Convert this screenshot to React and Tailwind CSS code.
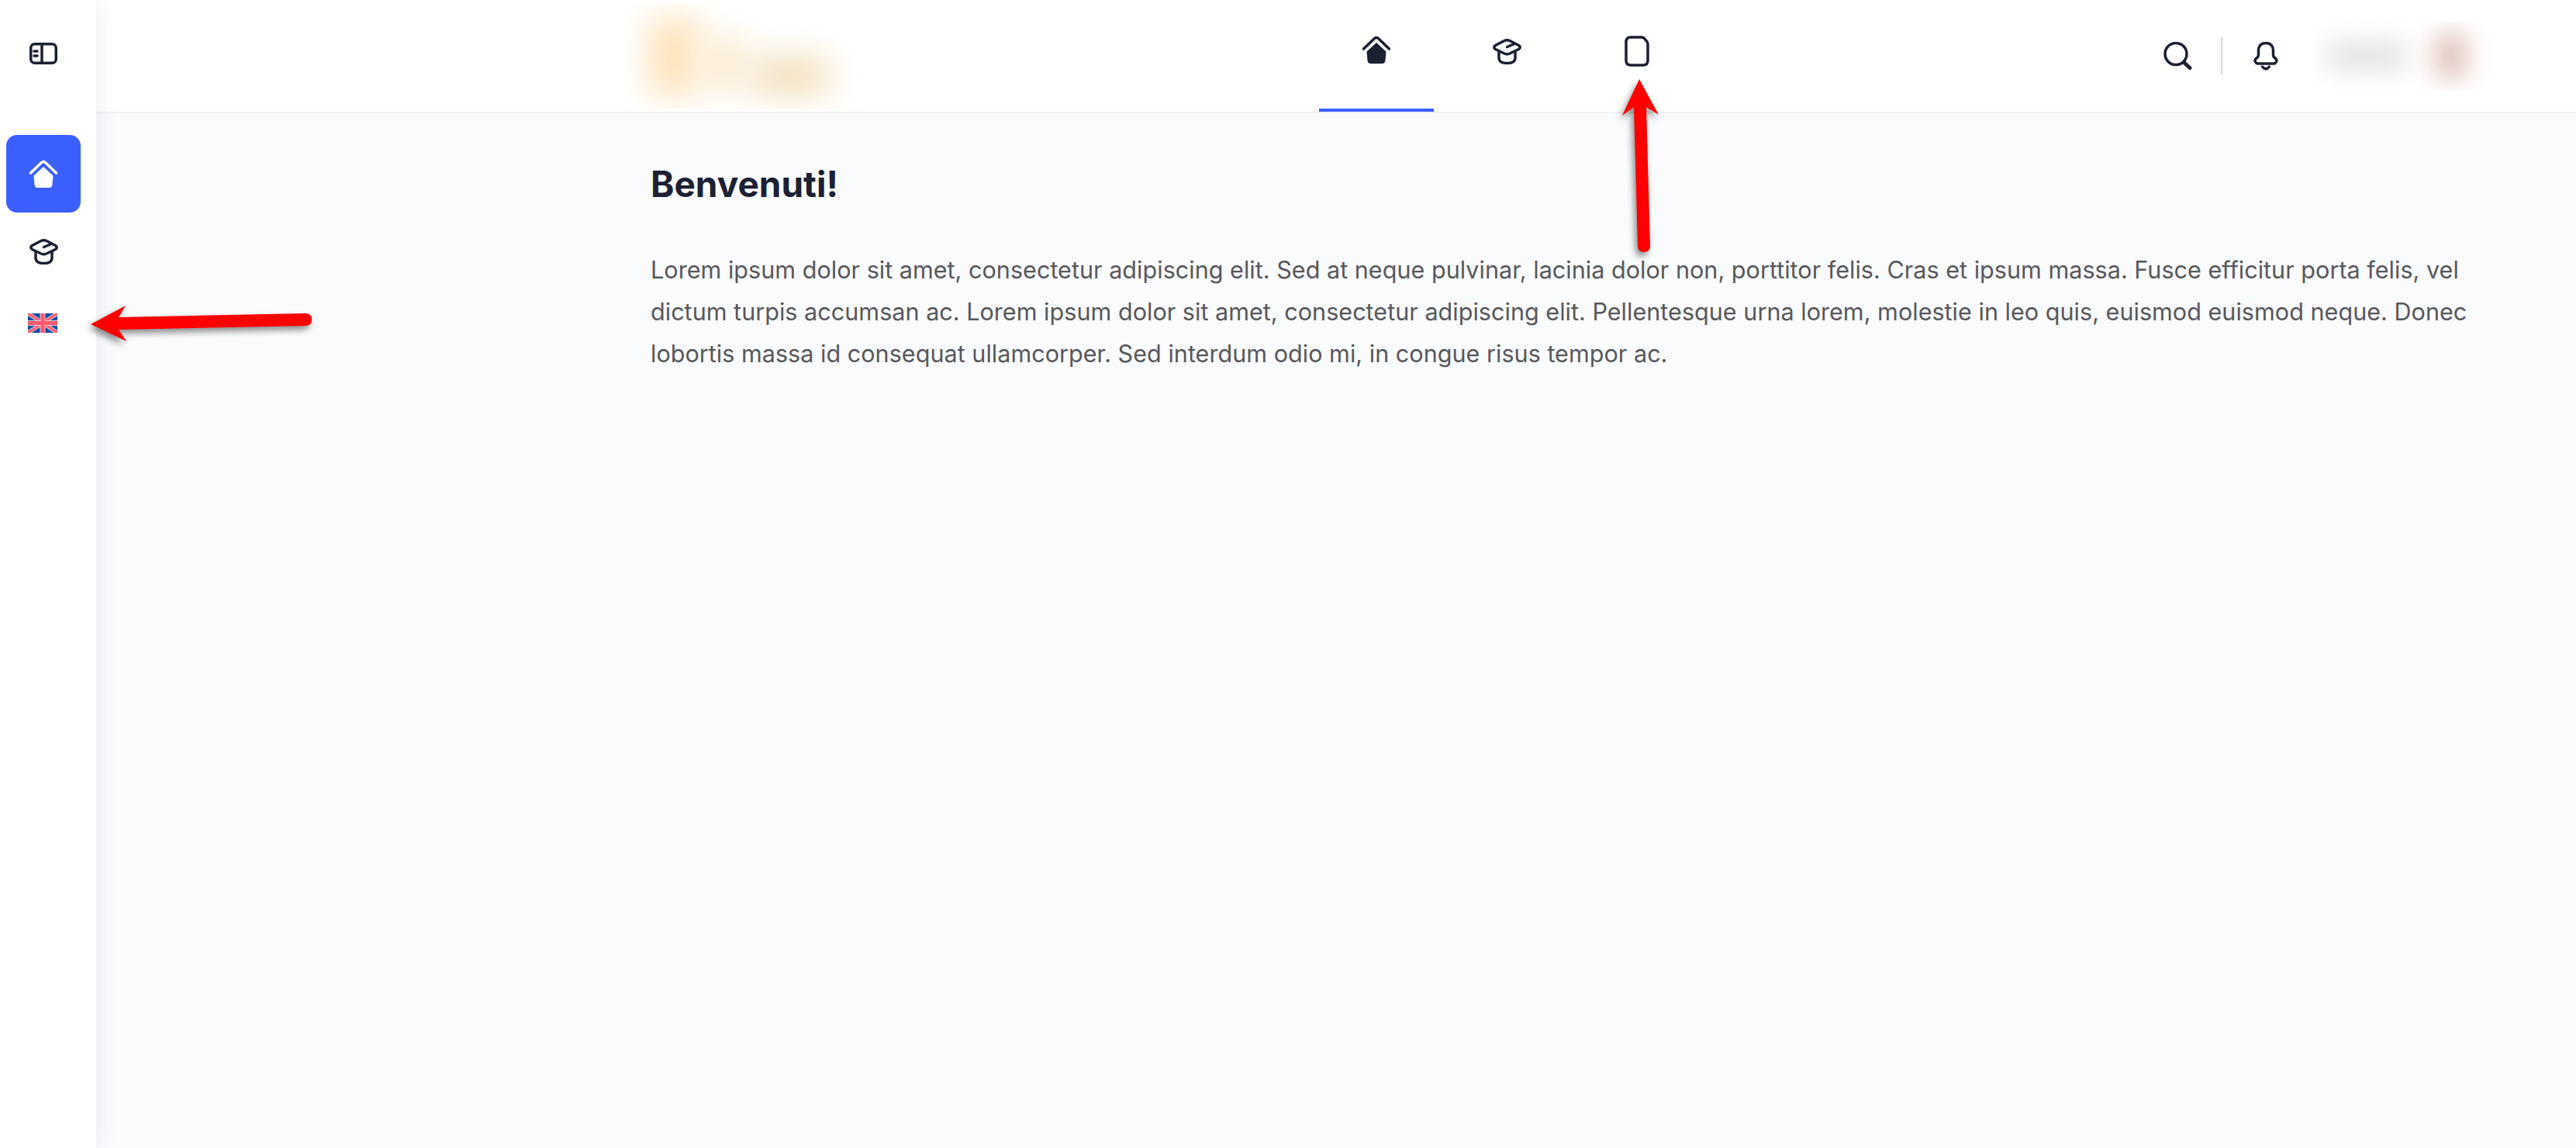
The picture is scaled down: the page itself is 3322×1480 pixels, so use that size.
import React from "react";

const INK = "#1c2033";

function PanelIcon() {
  return (
    <svg width="36" height="28" viewBox="0 0 36 28" fill="none" stroke={INK} strokeWidth="3.5" strokeLinecap="round">
      <rect x="1.75" y="1.75" width="32.5" height="24.5" rx="5" />
      <path d="M16 2V26" />
      <path d="M6 11H10M6 17H10" />
    </svg>
  );
}

function HomeIcon({ color }) {
  return (
    <svg width="36" height="36" viewBox="0 0 36 36" fill="none">
      <path d="M1.5 17L15.5 3.5Q18 1.5 20.5 3.5L34.5 17" stroke={color} strokeWidth="3.5" strokeLinecap="round" />
      <path d="M18 9L5.5 20.5L6.5 32Q7 36 10.5 36H25.5Q29 36 29.5 32L30.5 20.5Z" fill={color} />
    </svg>
  );
}

function CapIcon() {
  return (
    <svg width="37" height="33" viewBox="0 0 37 33" fill="none" stroke={INK} strokeWidth="3.5" strokeLinecap="round" strokeLinejoin="round">
      <path d="M15 2.5Q18.5 1 22 2.5L33.5 8.5Q37 11 33.5 13.5L22 19Q18.5 20.5 15 19L3.5 13.5Q0 11 3.5 8.5Z" />
      <path d="M18.5 10.5L27 7" />
      <path d="M8 16.5V24.5Q8 31.5 18.5 31.5Q29 31.5 29 24.5V16.5" />
    </svg>
  );
}

function DocIcon() {
  return (
    <svg width="32" height="40" viewBox="0 0 32 40" fill="none" stroke={INK} strokeWidth="3.5">
      <path d="M8 2H22Q24 2 25 3L28.5 7Q30 9 30 11V32Q30 38 24 38H8Q2 38 2 32V8Q2 2 8 2Z" />
    </svg>
  );
}

function SearchIcon() {
  return (
    <svg width="37" height="36" viewBox="0 0 37 36" fill="none" stroke={INK} strokeLinecap="round">
      <circle cx="16" cy="15.5" r="14" strokeWidth="3.5" />
      <path d="M27 27L34 33.5" strokeWidth="5" />
    </svg>
  );
}

function BellIcon() {
  return (
    <svg width="32" height="37" viewBox="0 0 32 37" fill="none" stroke={INK} strokeWidth="3.5" strokeLinecap="round" strokeLinejoin="round">
      <path d="M16 1.5C9.5 1.5 6.5 6 6.5 10.5V17Q6.5 19 4.5 20.5Q0 24 3.5 27Q4.5 28 6 28H26Q27.5 28 28.5 27Q32 24 27.5 20.5Q25.5 19 25.5 17V10.5C25.5 6 22.5 1.5 16 1.5Z" />
      <path d="M11.5 32Q16 37.5 20.5 32" />
    </svg>
  );
}

function FlagIcon() {
  return (
    <svg width="38" height="25" viewBox="0 0 38 25">
      <rect width="38" height="25" fill="#0b4ea8" />
      <path d="M0 0L38 25M38 0L0 25" stroke="#f3c9d0" strokeWidth="5" />
      <path d="M0 0L38 25M38 0L0 25" stroke="#ff5a6e" strokeWidth="3" />
      <path d="M19 0V25M0 12.5H38" stroke="#f3c9d0" strokeWidth="7" />
      <path d="M19 0V25M0 12.5H38" stroke="#ff5a6e" strokeWidth="5" />
    </svg>
  );
}

function Sidebar() {
  return (
    <aside className="relative z-10 flex w-[124px] shrink-0 flex-col items-center bg-white pr-[12px] pt-[55px] shadow-[0_0_28px_rgba(60,70,110,0.10)]">
      <PanelIcon />
      <div className="mt-[91px] flex h-[100px] w-[96px] items-center justify-center rounded-[14px] bg-[#3b5fff]">
        <HomeIcon color="#ffffff" />
      </div>
      <div className="mt-[34px]">
        <CapIcon />
      </div>
      <div className="mt-[63px] mr-[2px] flex">
        <FlagIcon />
      </div>
    </aside>
  );
}

function Tab({ active, children }) {
  return (
    <div
      className={`flex h-[144px] w-[148px] items-center justify-center pb-[12px] ${
        active ? "border-b-4 border-[#3b5fff]" : ""
      }`}
    >
      {children}
    </div>
  );
}

function Header() {
  return (
    <header className="flex h-[146px] items-start border-b-2 border-[#eef0f5] bg-white pl-[686px] pr-[85px]">
      {/* logo is blurred out in the shot */}
      <div className="mt-[5px] flex h-[135px] w-[312px] items-center overflow-hidden">
        <div className="ml-[24px] h-[105px] w-[70px] rounded-[30px] bg-[#fee3ba] blur-[22px]" />
        <div className="mt-[20px] h-[70px] w-[60px] bg-[#fcecd4] blur-[20px]" />
        <div className="mt-[50px] h-[55px] w-[110px] rounded-[30px] bg-[#f4e2c2] blur-[20px]" />
      </div>
      <nav className="ml-[579px] flex gap-[20px]">
        <Tab active>
          <HomeIcon color={INK} />
        </Tab>
        <Tab>
          <CapIcon />
        </Tab>
        <Tab>
          <DocIcon />
        </Tab>
      </nav>
      <div className="ml-auto flex h-[144px] items-center">
        <SearchIcon />
        <div className="ml-[37px] h-[48px] w-[2px] bg-[#d6d6d6]" />
        <div className="ml-[40px] flex">
          <BellIcon />
        </div>
        <div className="ml-[43px] flex h-[88px] w-[256px] items-center overflow-hidden">
          <div className="ml-[16px] h-[40px] w-[110px] rounded-full bg-[#e4e4e4] blur-[16px]" />
          <div className="ml-[32px] h-[62px] w-[44px] rounded-[16px] bg-[#e0c4bd] blur-[16px]" />
        </div>
      </div>
    </header>
  );
}

function Arrows() {
  return (
    <svg
      className="pointer-events-none absolute top-0 left-0 z-20 drop-shadow-[-3px_5px_4px_rgba(0,0,0,0.45)]"
      width="3322"
      height="1480"
      viewBox="0 0 3322 1480"
      fill="#ff0000"
    >
      <path d="M117 418L162 394L153 409L394 404Q402 404 402 412Q402 420 394 420L153 425L163 440Z" />
      <path d="M2114 102L2139 148L2123 138L2128 317Q2128 325 2120 325Q2112 325 2112 317L2107 138L2092 149Z" />
    </svg>
  );
}

export default function App() {
  return (
    <div className="relative flex h-[1480px] overflow-hidden bg-[#fafbfd] font-['Inter',sans-serif]">
      <Sidebar />
      <div className="flex min-w-0 flex-1 flex-col">
        <Header />
        <main className="pl-[715px] pr-[122px] pt-[62px]">
          <h1 className="text-[46px] font-bold leading-[58px] text-[#1c2033]">Benvenuti!</h1>
          <p className="mt-[55px] text-[30.6px] leading-[54px] text-[#58585c]">
            Lorem ipsum dolor sit amet, consectetur adipiscing elit. Sed at neque pulvinar, lacinia dolor non, porttitor
            felis. Cras et ipsum massa. Fusce efficitur porta felis, vel dictum turpis accumsan ac. Lorem ipsum dolor sit
            amet, consectetur adipiscing elit. Pellentesque urna lorem, molestie in leo quis, euismod euismod neque. Donec
            lobortis massa id consequat ullamcorper. Sed interdum odio mi, in congue risus tempor ac.
          </p>
        </main>
      </div>
      <Arrows />
    </div>
  );
}
